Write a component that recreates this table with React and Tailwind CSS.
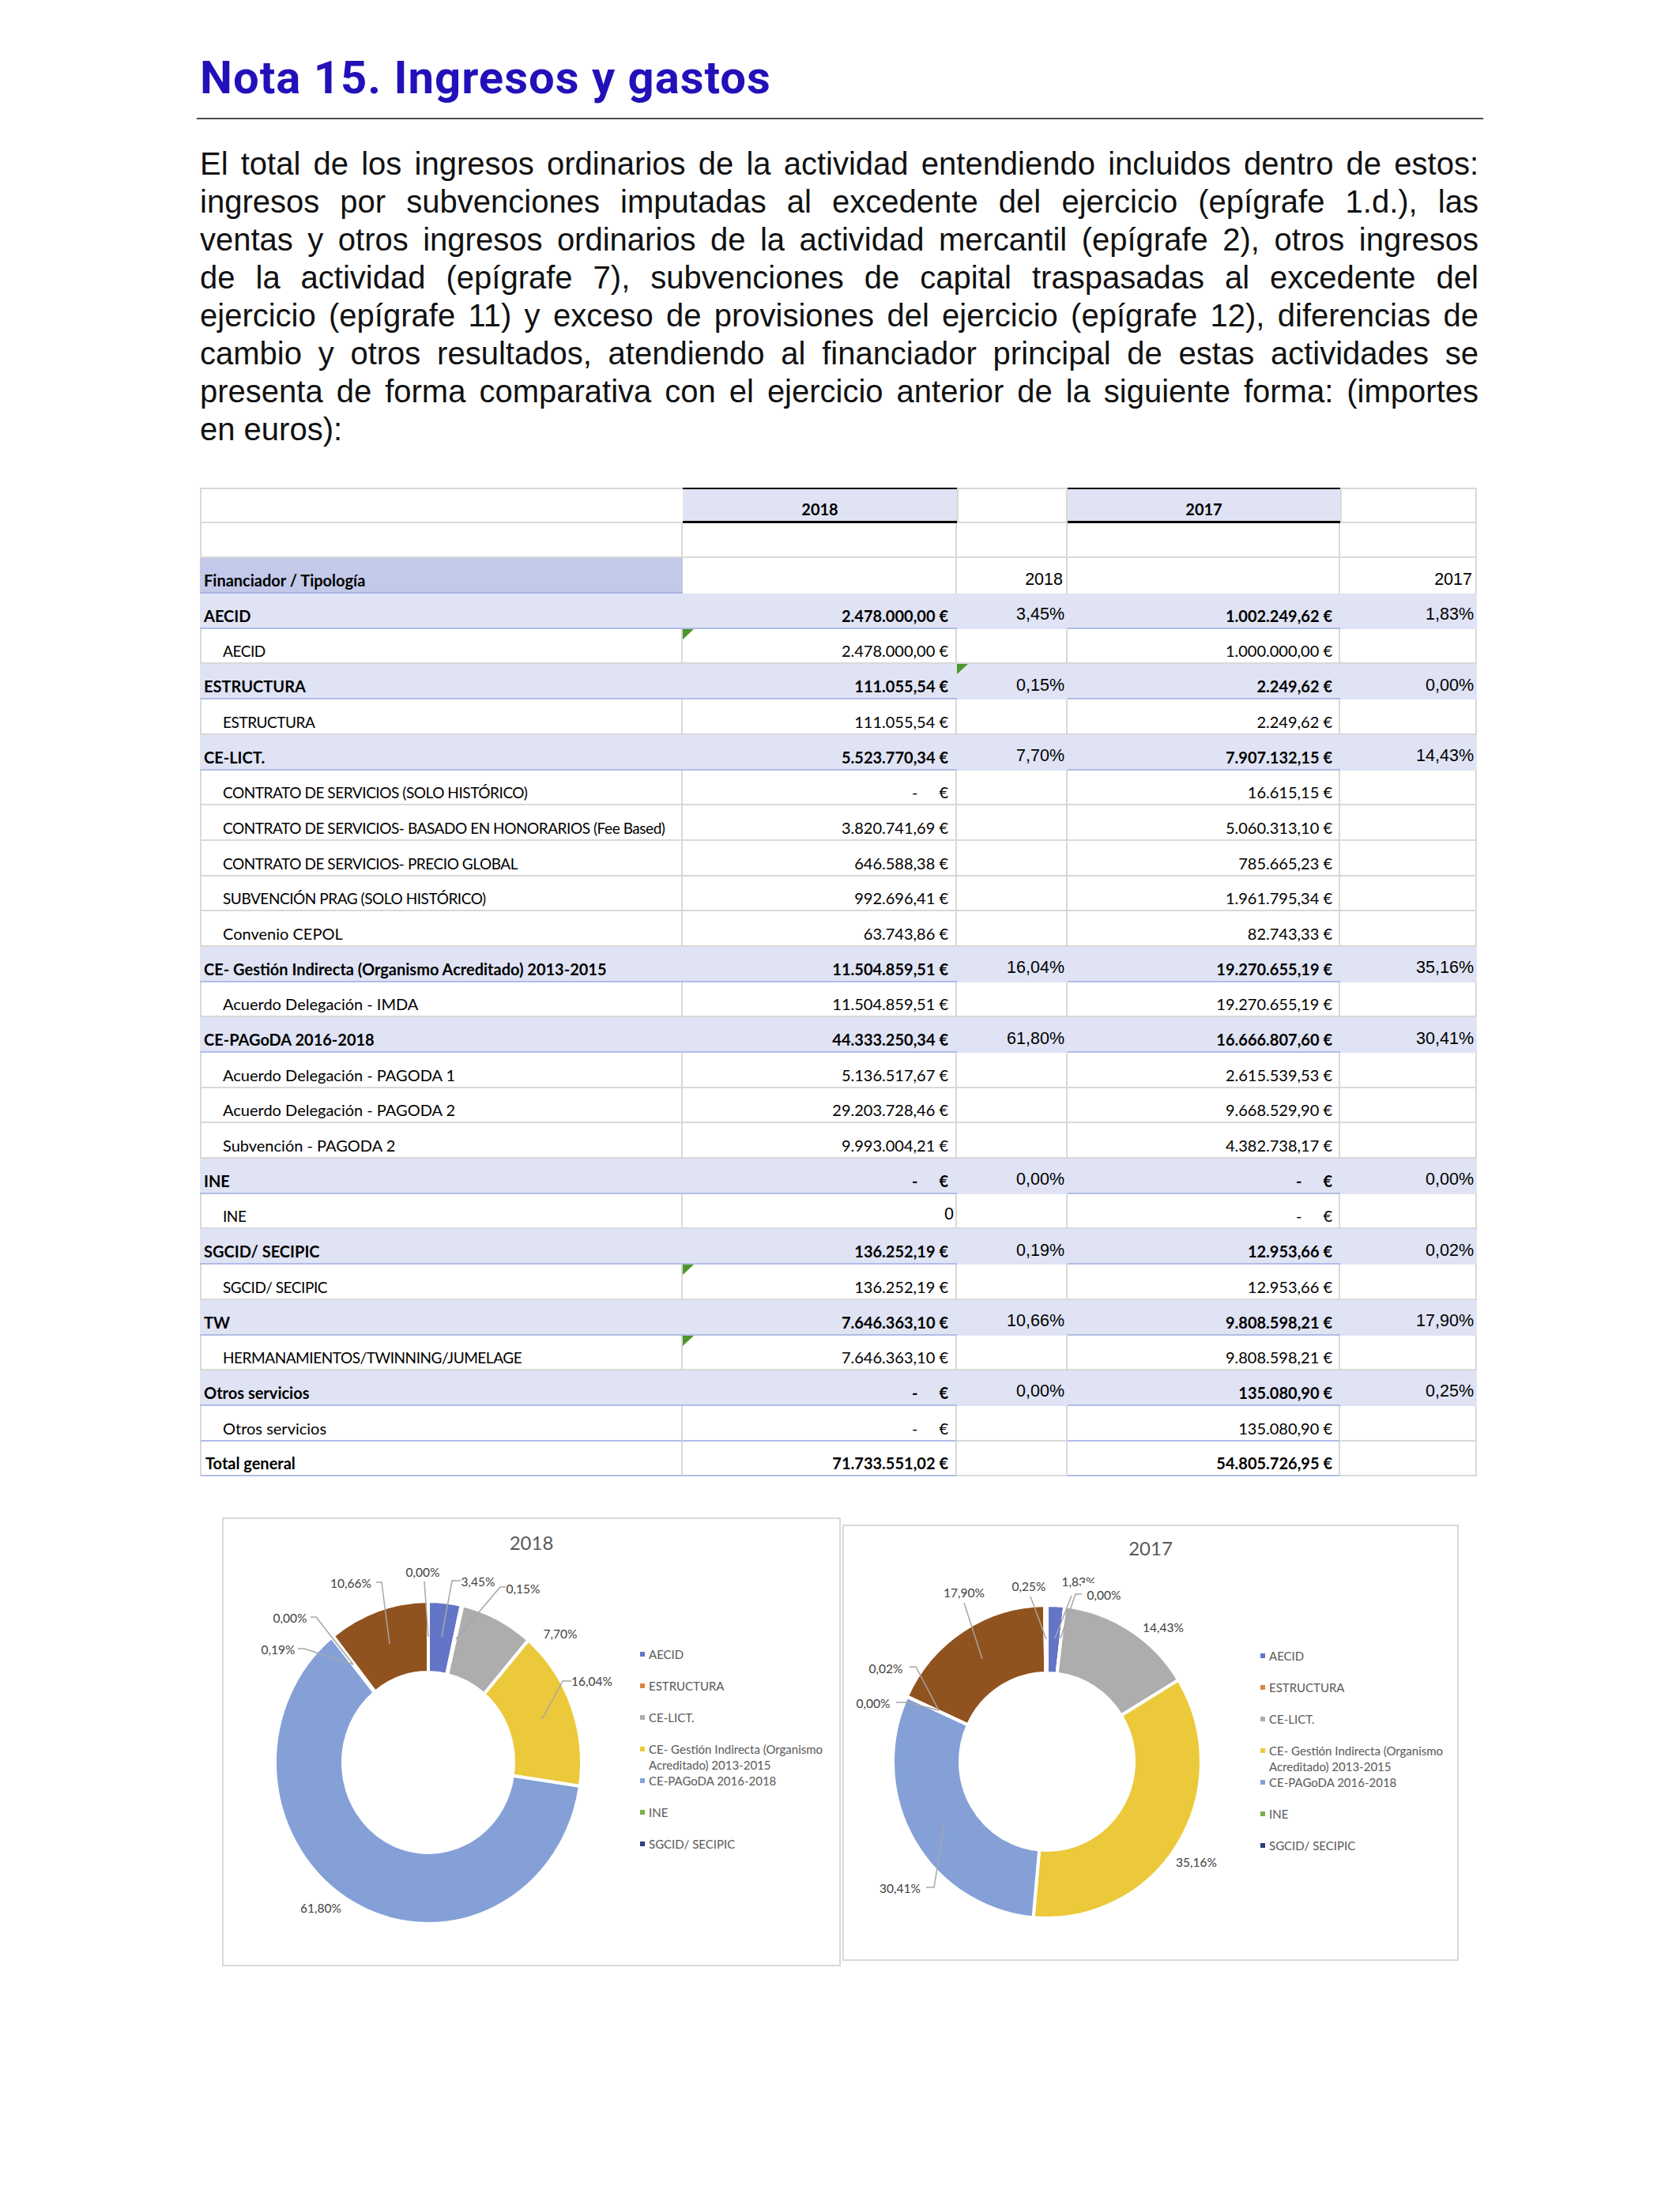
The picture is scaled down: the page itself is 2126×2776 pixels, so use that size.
import React from "react";

const LINES = [
  "El total de los ingresos ordinarios de la actividad entendiendo incluidos dentro de estos:",
  "ingresos por subvenciones imputadas al excedente del ejercicio (epígrafe 1.d.), las",
  "ventas y otros ingresos ordinarios de la actividad mercantil (epígrafe 2), otros ingresos",
  "de la actividad (epígrafe 7), subvenciones de capital traspasadas al excedente del",
  "ejercicio (epígrafe 11) y exceso de provisiones del ejercicio (epígrafe 12), diferencias de",
  "cambio y otros resultados, atendiendo al financiador principal de estas actividades se",
  "presenta de forma comparativa con el ejercicio anterior de la siguiente forma: (importes",
];

const ROWS = [
  { t: "sec", label: "AECID", a: "2.478.000,00 €", p: "3,45%", b: "1.002.249,62 €", q: "1,83%" },
  { t: "sub", label: "AECID", a: "2.478.000,00 €", b: "1.000.000,00 €", tri: true },
  { t: "sec", label: "ESTRUCTURA", a: "111.055,54 €", p: "0,15%", b: "2.249,62 €", q: "0,00%", triP: true },
  { t: "sub", label: "ESTRUCTURA", a: "111.055,54 €", b: "2.249,62 €" },
  { t: "sec", label: "CE-LICT.", a: "5.523.770,34 €", p: "7,70%", b: "7.907.132,15 €", q: "14,43%" },
  { t: "sub", label: "CONTRATO DE SERVICIOS (SOLO HISTÓRICO)", a: "-", b: "16.615,15 €" },
  { t: "sub", label: "CONTRATO DE SERVICIOS- BASADO EN HONORARIOS (Fee Based)", a: "3.820.741,69 €", b: "5.060.313,10 €", caps: true },
  { t: "sub", label: "CONTRATO DE SERVICIOS- PRECIO GLOBAL", a: "646.588,38 €", b: "785.665,23 €" },
  { t: "sub", label: "SUBVENCIÓN PRAG (SOLO HISTÓRICO)", a: "992.696,41 €", b: "1.961.795,34 €" },
  { t: "sub", label: "Convenio CEPOL", a: "63.743,86 €", b: "82.743,33 €" },
  { t: "sec", label: "CE- Gestión Indirecta (Organismo Acreditado) 2013-2015", a: "11.504.859,51 €", p: "16,04%", b: "19.270.655,19 €", q: "35,16%" },
  { t: "sub", label: "Acuerdo Delegación - IMDA", a: "11.504.859,51 €", b: "19.270.655,19 €" },
  { t: "sec", label: "CE-PAGoDA 2016-2018", a: "44.333.250,34 €", p: "61,80%", b: "16.666.807,60 €", q: "30,41%" },
  { t: "sub", label: "Acuerdo Delegación - PAGODA 1", a: "5.136.517,67 €", b: "2.615.539,53 €" },
  { t: "sub", label: "Acuerdo Delegación - PAGODA 2", a: "29.203.728,46 €", b: "9.668.529,90 €" },
  { t: "sub", label: "Subvención - PAGODA 2", a: "9.993.004,21 €", b: "4.382.738,17 €" },
  { t: "sec", label: "INE", a: "-", p: "0,00%", b: "-", q: "0,00%" },
  { t: "sub", label: "INE", a: "0", zero: true, b: "-" },
  { t: "sec", label: "SGCID/ SECIPIC", a: "136.252,19 €", p: "0,19%", b: "12.953,66 €", q: "0,02%" },
  { t: "sub", label: "SGCID/ SECIPIC", a: "136.252,19 €", b: "12.953,66 €", tri: true },
  { t: "sec", label: "TW", a: "7.646.363,10 €", p: "10,66%", b: "9.808.598,21 €", q: "17,90%" },
  { t: "sub", label: "HERMANAMIENTOS/TWINNING/JUMELAGE", a: "7.646.363,10 €", b: "9.808.598,21 €", tri: true },
  { t: "sec", label: "Otros servicios", a: "-", p: "0,00%", b: "135.080,90 €", q: "0,25%" },
  { t: "sub", label: "Otros servicios", a: "-", b: "135.080,90 €", blue: true },
  { t: "tot", label: "Total general", a: "71.733.551,02 €", b: "54.805.726,95 €" },
];

function isCaps(r) {
  return r.caps || r.label === r.label.toUpperCase();
}

function Amt({ v }) {
  if (v === "-")
    return (
      <span className="flex">
        <span>-</span>
        <span className="ml-[27px]">€</span>
      </span>
    );
  return <span className="whitespace-nowrap">{v}</span>;
}

function Tri() {
  return (
    <svg className="absolute left-0 top-0" width="14" height="13" viewBox="0 0 14 13">
      <polygon points="0,0 14,0 0,13" fill="#4f952c" />
    </svg>
  );
}

const PCT = "font-['Liberation_Sans',Arial,sans-serif] text-[21.5px]";

function Label({ r }) {
  return <span className={isCaps(r) ? "text-[19px] tracking-[-0.45px]" : ""}>{r.label}</span>;
}

function Row({ r }) {
  if (r.t === "sec") {
    return (
      <>
        <div className="flex items-end pl-[5px] pb-[5px] bg-[#dfe3f4] border-b-2 border-b-[#b1bde6] font-bold whitespace-nowrap">{r.label}</div>
        <div className="flex items-end justify-end pr-[11px] pb-[5px] bg-[#dfe3f4] border-b-2 border-b-[#b1bde6] font-bold"><Amt v={r.a} /></div>
        <div className={"relative flex items-end justify-end pr-[4px] pb-[7px] bg-[#dfe3f4] " + PCT}>
          {r.triP && <Tri />}
          {r.p}
        </div>
        <div className="flex items-end justify-end pr-[10px] pb-[5px] bg-[#dfe3f4] border-b-2 border-b-[#b1bde6] font-bold"><Amt v={r.b} /></div>
        <div className={"flex items-end justify-end pr-[4px] pb-[7px] bg-[#dfe3f4] " + PCT}>{r.q}</div>
      </>
    );
  }
  if (r.t === "sub") {
    return (
      <>
        <div className={r.blue ? "flex items-end pl-[27px] pb-[5px] border-l-2 border-l-[#d9d9d9] border-b-2 border-b-[#b1bde6] border-r-2 border-r-[#d9d9d9] whitespace-nowrap" : "flex items-end pl-[27px] pb-[5px] border-l-2 border-l-[#d9d9d9] border-b-2 border-b-[#d9d9d9] border-r-2 border-r-[#d9d9d9] whitespace-nowrap"}>
          <Label r={r} />
        </div>
        {r.zero ? (
          <div className={"relative flex items-end justify-end pr-[2px] pb-[6px] border-b-2 border-b-[#d9d9d9] border-r-2 border-r-[#d9d9d9] " + PCT}>{r.a}</div>
        ) : (
          <div className={r.blue ? "relative flex items-end justify-end pr-[9px] pb-[5px] border-b-2 border-b-[#b1bde6] border-r-2 border-r-[#d9d9d9]" : "relative flex items-end justify-end pr-[9px] pb-[5px] border-b-2 border-b-[#d9d9d9] border-r-2 border-r-[#d9d9d9]"}>
            {r.tri && <Tri />}
            <Amt v={r.a} />
          </div>
        )}
        <div className="border-b-2 border-b-[#d9d9d9] border-r-2 border-r-[#d9d9d9]"></div>
        <div className={r.blue ? "flex items-end justify-end pr-[8px] pb-[5px] border-b-2 border-b-[#b1bde6] border-r-2 border-r-[#d9d9d9]" : "flex items-end justify-end pr-[8px] pb-[5px] border-b-2 border-b-[#d9d9d9] border-r-2 border-r-[#d9d9d9]"}><Amt v={r.b} /></div>
        <div className="border-b-2 border-b-[#d9d9d9] border-r-2 border-r-[#d9d9d9]"></div>
      </>
    );
  }
  return (
    <>
      <div className="flex items-end pl-[5px] pb-[5px] border-l-2 border-l-[#d9d9d9] border-b-2 border-b-[#b1bde6] border-r-2 border-r-[#d9d9d9] font-bold">{r.label}</div>
      <div className="flex items-end justify-end pr-[9px] pb-[5px] border-b-2 border-b-[#b1bde6] border-r-2 border-r-[#d9d9d9] font-bold"><Amt v={r.a} /></div>
      <div className="border-b-2 border-b-[#d9d9d9] border-r-2 border-r-[#d9d9d9]"></div>
      <div className="flex items-end justify-end pr-[8px] pb-[5px] border-b-2 border-b-[#b1bde6] border-r-2 border-r-[#d9d9d9] font-bold"><Amt v={r.b} /></div>
      <div className="border-b-2 border-b-[#d9d9d9] border-r-2 border-r-[#d9d9d9]"></div>
    </>
  );
}

function Table() {
  return (
    <div className="grid grid-cols-[611px_347px_140px_345px_173px] auto-rows-[44.7px] font-['Lato',sans-serif] text-[20px] leading-none text-black">
      {/* header row A */}
      <div className="border-t-2 border-t-[#d9d9d9] border-l-2 border-l-[#d9d9d9] border-b-2 border-b-[#d9d9d9]"></div>
      <div className="flex items-end justify-center pb-[5px] bg-[#dfe3f4] border-t-2 border-t-black border-b-[3px] border-b-black font-bold">2018</div>
      <div className="border-t-2 border-t-[#d9d9d9] border-l-2 border-l-[#d9d9d9] border-b-2 border-b-[#d9d9d9] border-r-2 border-r-[#d9d9d9]"></div>
      <div className="flex items-end justify-center pb-[5px] bg-[#dfe3f4] border-t-2 border-t-black border-b-[3px] border-b-black font-bold">2017</div>
      <div className="border-t-2 border-t-[#d9d9d9] border-l-2 border-l-[#d9d9d9] border-b-2 border-b-[#d9d9d9] border-r-2 border-r-[#d9d9d9]"></div>
      {/* row B */}
      <div className="border-l-2 border-l-[#d9d9d9] border-b-2 border-b-[#d9d9d9] border-r-2 border-r-[#d9d9d9]"></div>
      <div className="border-b-2 border-b-[#d9d9d9] border-r-2 border-r-[#d9d9d9]"></div>
      <div className="border-b-2 border-b-[#d9d9d9] border-r-2 border-r-[#d9d9d9]"></div>
      <div className="border-b-2 border-b-[#d9d9d9] border-r-2 border-r-[#d9d9d9]"></div>
      <div className="border-b-2 border-b-[#d9d9d9] border-r-2 border-r-[#d9d9d9]"></div>
      {/* row C */}
      <div className="flex items-end pl-[5px] pb-[5px] bg-[#c3c9e8] border-b-2 border-b-[#a9b5e0] font-bold">Financiador / Tipología</div>
      <div className="border-r-2 border-r-[#d9d9d9]"></div>
      <div className={"flex items-end justify-end pr-[4px] pb-[7px] border-r-2 border-r-[#d9d9d9] " + PCT}>2018</div>
      <div className="border-r-2 border-r-[#d9d9d9]"></div>
      <div className={"flex items-end justify-end pr-[4px] pb-[7px] border-r-2 border-r-[#d9d9d9] " + PCT}>2017</div>
      {ROWS.map((r, i) => (
        <Row key={i} r={r} />
      ))}
    </div>
  );
}

const COLORS = {
  aecid: "#6475c7",
  estr: "#dd8444",
  lict: "#adadad",
  gest: "#ecc93b",
  pag: "#84a0d7",
  ine: "#7cad4e",
  sgcid: "#2e3f7c",
  tw: "#90521e",
  otros: "#9e480e",
};

const D2018 = [
  { v: 2478000, c: COLORS.aecid },
  { v: 111055.54, c: COLORS.estr },
  { v: 5523770.34, c: COLORS.lict },
  { v: 11504859.51, c: COLORS.gest },
  { v: 44333250.34, c: COLORS.pag },
  { v: 0, c: COLORS.ine },
  { v: 136252.19, c: COLORS.sgcid },
  { v: 7646363.1, c: COLORS.tw },
  { v: 0, c: COLORS.otros },
];

const D2017 = [
  { v: 1002249.62, c: COLORS.aecid },
  { v: 2249.62, c: COLORS.estr },
  { v: 7907132.15, c: COLORS.lict },
  { v: 19270655.19, c: COLORS.gest },
  { v: 16666807.6, c: COLORS.pag },
  { v: 0, c: COLORS.ine },
  { v: 12953.66, c: COLORS.sgcid },
  { v: 9808598.21, c: COLORS.tw },
  { v: 135080.9, c: COLORS.otros },
];

function Slices({ data, cx, cy, rx, ry, irx, iry }) {
  const total = data.reduce((s, d) => s + d.v, 0);
  let acc = 0;
  return data.map((d, i) => {
    const a0 = (acc / total) * 2 * Math.PI - Math.PI / 2;
    acc += d.v;
    const a1 = (acc / total) * 2 * Math.PI - Math.PI / 2;
    if (d.v <= 0) return null;
    const large = a1 - a0 > Math.PI ? 1 : 0;
    const p = (r1, r2, a) => [cx + r1 * Math.cos(a), cy + r2 * Math.sin(a)];
    const [x0, y0] = p(rx, ry, a0);
    const [x1, y1] = p(rx, ry, a1);
    const [x2, y2] = p(irx, iry, a1);
    const [x3, y3] = p(irx, iry, a0);
    return (
      <path
        key={i}
        d={`M${x0} ${y0} A${rx} ${ry} 0 ${large} 1 ${x1} ${y1} L${x2} ${y2} A${irx} ${iry} 0 ${large} 0 ${x3} ${y3} Z`}
        fill={d.c}
        stroke="#ffffff"
        strokeWidth="4"
        strokeLinejoin="round"
      />
    );
  });
}

function Legend({ pt }) {
  const items = [
    { c: COLORS.aecid, t: ["AECID"] },
    { c: COLORS.estr, t: ["ESTRUCTURA"] },
    { c: COLORS.lict, t: ["CE-LICT."] },
    { c: COLORS.gest, t: ["CE- Gestión Indirecta (Organismo", "Acreditado) 2013-2015"] },
    { c: COLORS.pag, t: ["CE-PAGoDA 2016-2018"], tight: true },
    { c: COLORS.ine, t: ["INE"] },
    { c: COLORS.sgcid, t: ["SGCID/ SECIPIC"] },
  ];
  return (
    <div className={"ml-[7px] flex flex-col font-['Lato',sans-serif] text-[15px] leading-[20px] text-[#595959] " + pt}>
      {items.map((it, i) => (
        <div key={i} className={i === 0 || it.tight ? "flex items-start" : "flex items-start mt-[20px]"}>
          <span className="mt-[7px] mr-[5px] w-[6px] h-[6px] shrink-0" style={{ background: it.c }}></span>
          <span className="whitespace-nowrap">
            {it.t.map((l, j) => (
              <span key={j} className="block">{l}</span>
            ))}
          </span>
        </div>
      ))}
    </div>
  );
}

function Labels({ labels, lines }) {
  return (
    <>
      {lines.map((l, i) => (
        <polyline key={"l" + i} points={l} fill="none" stroke="#a6a6a6" strokeWidth="1.5" />
      ))}
      {labels.map((l, i) => (
        <React.Fragment key={"t" + i}>
          {l.cover && <rect x={l.cover[0]} y={l.cover[1]} width={l.cover[2]} height={l.cover[3]} fill="#ffffff" />}
          <text
            x={l.x}
            y={l.y}
            textAnchor="middle"
            dominantBaseline="central"
            fontFamily="Lato, sans-serif"
            fontSize="15.5"
            fill="#404040"
          >
            {l.t}
          </text>
        </React.Fragment>
      ))}
    </>
  );
}

const L2018 = [
  { t: "0,00%", x: 252, y: 9 },
  { t: "10,66%", x: 161, y: 23 },
  { t: "3,45%", x: 322, y: 21 },
  { t: "0,15%", x: 379, y: 30 },
  { t: "7,70%", x: 426, y: 87 },
  { t: "16,04%", x: 466, y: 147 },
  { t: "0,00%", x: 84, y: 67 },
  { t: "0,19%", x: 69, y: 107 },
  { t: "61,80%", x: 123, y: 434 },
];
const LN2018 = [
  "254,21 259,91",
  "193,22 200,22 210,100",
  "300,20 289,20 276,91",
  "357,28 350,28 294,94",
  "440,147 429,147 403,195",
  "110,66 117,66 164,126",
  "94,106 102,106 164,126",
];

const L2017 = [
  { t: "17,90%", x: 152, y: 26 },
  { t: "0,25%", x: 234, y: 18 },
  { t: "1,83%", x: 297, y: 12 },
  { t: "0,00%", x: 329, y: 29, cover: [300, 14, 34, 9] },
  { t: "14,43%", x: 404, y: 70 },
  { t: "35,16%", x: 446, y: 367 },
  { t: "30,41%", x: 71, y: 400 },
  { t: "0,02%", x: 53, y: 122 },
  { t: "0,00%", x: 37, y: 166 },
];
const LN2017 = [
  "152,39 175,110",
  "236,31 256,85",
  "288,30 267,84",
  "301,28 293,28 274,84",
  "104,399 114,399 127,319",
  "83,120 91,120 120,175",
  "66,165 79,165 120,175",
];

function Charts() {
  return (
    <div className="flex items-start ml-[28px] mt-[52px]">
      <div className="w-[783px] h-[568px] border-2 border-[#d9d9d9] flex flex-col">
        <div className="h-[58px] pt-[16px] text-center font-['Lato',sans-serif] text-[24px] leading-[28px] text-[#595959]">2018</div>
        <div className="flex">
          <svg width="520" height="506" viewBox="0 0 520 506" className="shrink-0">
            <Slices data={D2018} cx={259} cy={250} rx={194} ry={204} irx={108} iry={114} />
            <Labels labels={L2018} lines={LN2018} />
          </svg>
          <Legend pt="pt-[103px]" />
        </div>
      </div>
      <div className="ml-[2px] mt-[9px] w-[780px] h-[552px] border-2 border-[#d9d9d9] flex flex-col">
        <div className="h-[58px] pt-[14px] text-center font-['Lato',sans-serif] text-[24px] leading-[28px] text-[#595959]">2017</div>
        <div className="flex">
          <svg width="520" height="490" viewBox="0 0 520 490" className="shrink-0">
            <Slices data={D2017} cx={257} cy={240} rx={195} ry={198} irx={110} iry={112} />
            <Labels labels={L2017} lines={LN2017} />
          </svg>
          <Legend pt="pt-[96px]" />
        </div>
      </div>
    </div>
  );
}

export default function App() {
  return (
    <div className="w-[2126px] h-[2776px] bg-white overflow-hidden">
      <div className="pl-[253px] pr-[255px] pt-[63px]">
        <h1 className="font-['Roboto',sans-serif] font-bold text-[58px] leading-[70px] tracking-[1px] text-[#2211b9] whitespace-nowrap">
          Nota 15. Ingresos y gastos
        </h1>
        <div className="mt-[16px] h-[2px] bg-[#4d4d4d] -ml-[4px] mr-[-6px]"></div>
        <div className="mt-[32px] font-['Liberation_Sans',Arial,sans-serif] text-[40px] leading-[48px] text-[#111]">
          {LINES.map((l, i) => (
            <div key={i} className="h-[48px] text-justify [text-align-last:justify]">
              {l}
            </div>
          ))}
          <div className="h-[48px]">en euros):</div>
        </div>
        <div className="mt-[50px]">
          <Table />
        </div>
        <Charts />
      </div>
    </div>
  );
}
